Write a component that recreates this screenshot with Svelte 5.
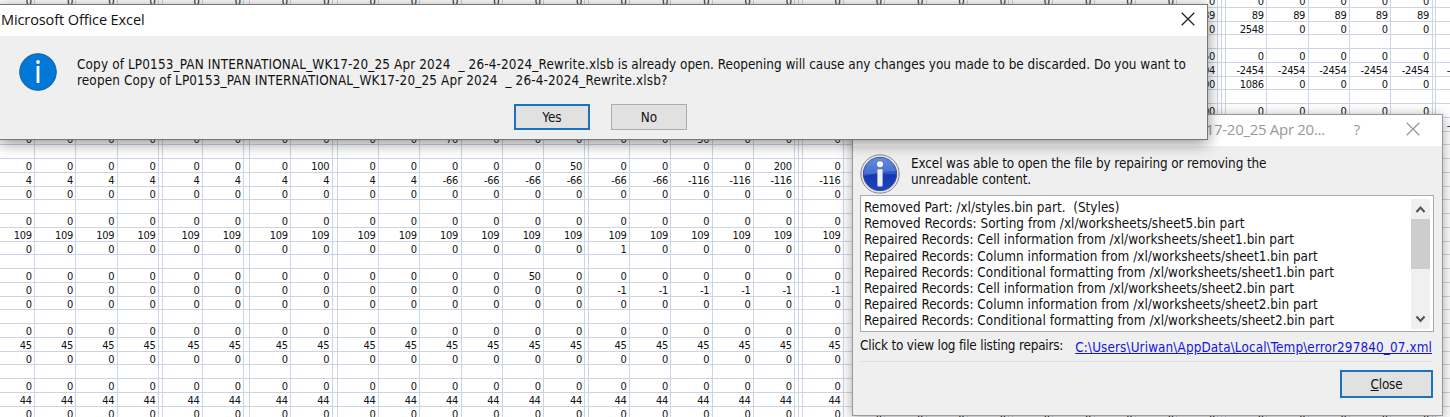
<script>
    const COLUMNS = 35;

    // narrow separator columns, keyed by the data column they follow
    const spacers = { 3: 1, 5: 1, 7: 1, 13: 1, 18: 2, 23: 1, 28: 2, 33: 1 };

    function row(value, changes = {}) {
        const cells = [];
        let current = value;
        for (let i = 0; i < COLUMNS; i++) {
            if (changes.from && i in changes.from) current = changes.from[i];
            cells.push(changes.at && i in changes.at ? changes.at[i] : current);
            for (let s = 0; s < (spacers[i] ?? 0); s++) cells.push('');
        }
        return cells;
    }

    const blank = row('');
    const zero = row(0, { from: { 34: '' } });

    const rows = [
        zero,
        row(89, { from: { 34: '' } }),
        row(0, { at: { 29: 2548, 34: '' } }),
        blank,
        row(0, { at: { 28: 50, 34: '' } }),
        row(-2454, { at: { 28: -2494 } }),
        row(0, { at: { 28: 100, 29: 1086, 34: '' } }),
        blank,
        row(0, { at: { 28: 100, 34: '' } }),
        row(-66, { from: { 28: -2454 } }),
        row(0, { at: { 10: 70, 16: 50, 34: '' } }),
        blank,
        row(0, { at: { 7: 100, 13: 50, 18: 200, 34: '' } }),
        row(4, { from: { 10: -66, 16: -116, 34: '' } }),
        zero,
        blank,
        zero,
        row(109, { from: { 34: '' } }),
        row(0, { at: { 14: 1, 34: '' } }),
        blank,
        row(0, { at: { 12: 50, 34: '' } }),
        row(0, { from: { 14: -1, 34: '' } }),
        zero,
        blank,
        zero,
        row(45, { from: { 34: '' } }),
        zero,
        blank,
        zero,
        row(44, { from: { 34: '' } }),
        zero
    ];

    const repairs = [
        'Removed Part: /xl/styles.bin part.  (Styles)',
        'Removed Records: Sorting from /xl/worksheets/sheet5.bin part',
        'Repaired Records: Cell information from /xl/worksheets/sheet1.bin part',
        'Repaired Records: Column information from /xl/worksheets/sheet1.bin part',
        'Repaired Records: Conditional formatting from /xl/worksheets/sheet1.bin part',
        'Repaired Records: Cell information from /xl/worksheets/sheet2.bin part',
        'Repaired Records: Column information from /xl/worksheets/sheet2.bin part',
        'Repaired Records: Conditional formatting from /xl/worksheets/sheet2.bin part'
    ];
</script>

<div class="screen">
    <div class="sheet">
        {#each rows as cells}
            {#each cells as cell}
                <div class="cell">{cell}</div>
            {/each}
        {/each}
    </div>

    <section class="window repair">
        <header class="titlebar">
            <span class="title">WK17-20_25 Apr 20...</span>
            <span class="help">?</span>
            <svg class="x" viewBox="0 0 14 14"><path d="M.7.7l12.6 12.6M13.3.7L.7 13.3" /></svg>
        </header>
        <div class="summary">
            <svg class="info" viewBox="0 0 40 40">
                <defs>
                    <linearGradient id="ball" x1="0" y1="0" x2="0" y2="1">
                        <stop offset="0" stop-color="#4a7bd8" />
                        <stop offset=".5" stop-color="#2a55c4" />
                        <stop offset=".52" stop-color="#1436b4" />
                        <stop offset="1" stop-color="#1f46c4" />
                    </linearGradient>
                </defs>
                <circle cx="20" cy="20" r="19.2" fill="#e9e9ec" stroke="#85878d" />
                <circle cx="20" cy="20" r="16.7" fill="url(#ball)" stroke="#34508e" />
                <path d="M4 22a16 16 0 0 1 32-5Q22 17 4 22z" fill="#fff" opacity=".14" />
                <circle cx="20" cy="10.2" r="3" fill="#fff" />
                <rect x="17.4" y="15.3" width="5.2" height="17.2" rx="1" fill="#f1f1f5" />
            </svg>
            <p>Excel was able to open the file by repairing or removing the<br />unreadable content.</p>
        </div>
        <div class="list">
            <ul>
                {#each repairs as repair}
                    <li>{repair}</li>
                {/each}
            </ul>
            <div class="scrollbar">
                <svg class="arrow" viewBox="0 0 18 20"><path d="M5 13l4-4.4L13 13" /></svg>
                <div class="thumb"></div>
                <svg class="arrow down" viewBox="0 0 18 20"><path d="M5 7.5l4 4.4 4-4.4" /></svg>
            </div>
        </div>
        <div class="log">
            <span class="log-label">Click to view log file listing repairs:</span>
            <a href="#log">C:\Users\Uriwan\AppData\Local\Temp\error297840_07.xml</a>
        </div>
        <footer>
            <button class="default close"><span><u>C</u>lose</span></button>
        </footer>
    </section>

    <section class="window prompt">
        <header class="titlebar">
            <span class="title">Microsoft Office Excel</span>
            <svg class="x" viewBox="0 0 14 14"><path d="M.7.7l12.6 12.6M13.3.7L.7 13.3" /></svg>
        </header>
        <div class="message">
            <svg class="info" viewBox="0 0 38 38">
                <circle cx="19" cy="19" r="18.3" fill="#0078d7" stroke="#1761a0" />
                <circle cx="19" cy="9" r="1.9" fill="#fff" />
                <rect x="17.6" y="13" width="2.8" height="17" fill="#fff" />
            </svg>
            <p>
                <span class="file">Copy of LP0153_PAN INTERNATIONAL_WK17-20_25 Apr 2024&nbsp; _ 26-4-2024_Rewrite.xlsb</span> is already open. Reopening will cause any changes you made to be discarded. Do you want to<br />
                <span class="file">reopen Copy of LP0153_PAN INTERNATIONAL_WK17-20_25 Apr 2024&nbsp; _ 26-4-2024_Rewrite.xlsb?</span>
            </p>
        </div>
        <div class="buttons">
            <button class="default">Yes</button>
            <button>No</button>
        </div>
    </section>
</div>

<style>
    :global(body) {
        background: white;
    }
    .screen {
        position: relative;
        width: 1450px;
        height: 417px;
        overflow: hidden;
        font-family: 'DejaVu Sans Condensed', 'DejaVu Sans', sans-serif;
        font-stretch: condensed;
        font-size: 13.4px;
        color: #111;
    }

    .sheet {
        display: grid;
        grid-template-columns:
            35.2px repeat(3, 41.3px) 2.7px repeat(2, 41.3px) 5.7px repeat(2, 41.3px) 5px
            repeat(6, 41.3px) 3.4px repeat(5, 41.3px) 3.7px 3.7px repeat(5, 41.3px) 2.8px
            repeat(5, 41.3px) 3.8px 3.8px repeat(5, 41.3px) 3.6px 41.3px;
        grid-auto-rows: 13.75px;
        margin-top: -6px;
        width: 1500px;
    }
    .cell {
        box-sizing: border-box;
        overflow: hidden;
        padding: 1px 2.5px 0 0;
        border-right: 1px solid #cdd5e3;
        border-bottom: 1px solid #cdd5e3;
        line-height: 14px;
        font-size: 11px;
        letter-spacing: -0.3px;
        text-align: right;
        white-space: nowrap;
    }

    .window {
        position: absolute;
        box-sizing: border-box;
        background: #efefef;
    }
    .titlebar {
        display: flex;
        align-items: center;
        box-sizing: border-box;
        height: 31px;
        background: white;
        font-family: 'Open Sans', 'Noto Sans', sans-serif;
        font-stretch: normal;
    }
    .title {
        white-space: nowrap;
    }
    .x {
        width: 14px;
        height: 14px;
        fill: none;
        stroke: #222;
        stroke-width: 1.3;
    }
    p {
        margin: 0;
        line-height: 16.2px;
        white-space: nowrap;
    }
    button {
        box-sizing: border-box;
        width: 76px;
        height: 26px;
        padding: 0;
        border: 1px solid #adadad;
        background: #e1e1e1;
        font: inherit;
        color: inherit;
        text-align: center;
    }
    .default {
        border: 2px solid #1874c0;
    }

    .prompt {
        left: -1px;
        top: 4px;
        width: 1209px;
        height: 136px;
        border: 1px solid #777;
        box-shadow: 0 3px 14px rgba(0, 0, 0, 0.45);
    }
    .prompt .titlebar {
        padding: 0 12px 3px 1px;
        justify-content: space-between;
        font-size: 14.5px;
        letter-spacing: -0.1px;
    }
    .message {
        display: flex;
        padding: 17px 0 0 19px;
        height: 51px;
    }
    .prompt .info {
        width: 38px;
        height: 38px;
        margin-right: 20px;
    }
    .message p {
        padding-top: 4px;
    }
    .file {
        letter-spacing: 0.15px;
    }
    .buttons {
        display: flex;
        gap: 21px;
        padding-left: 514px;
    }

    .repair {
        left: 852px;
        top: 114px;
        width: 591px;
        height: 302px;
        border: 1px solid #999;
        box-shadow: 0 2px 12px rgba(0, 0, 0, 0.35);
    }
    .repair .titlebar {
        justify-content: flex-end;
        padding: 0 22px 3px 0;
        font-size: 15px;
        letter-spacing: -0.3px;
        color: #999;
    }
    .repair .x {
        stroke: #999;
    }
    .help {
        margin: 0 46px 0 29px;
    }
    .summary {
        display: flex;
        height: 49px;
        padding-left: 7px;
    }
    .repair .info {
        width: 40px;
        height: 40px;
        margin: 8px 11px 0 0;
    }
    .summary p {
        padding-top: 10px;
        letter-spacing: -0.1px;
    }
    .list {
        display: flex;
        justify-content: space-between;
        box-sizing: border-box;
        width: 574px;
        height: 137px;
        margin-left: 7px;
        padding: 3px 3px 2px 3px;
        border: 1px solid #aaa;
        background: white;
    }
    ul {
        margin: 0;
        padding: 1px 0 0;
        list-style: none;
    }
    li {
        height: 16.2px;
        line-height: 16px;
        letter-spacing: 0.03px;
        white-space: pre;
    }
    .scrollbar {
        display: flex;
        flex-direction: column;
        width: 19px;
        background: #f0f0f0;
    }
    .arrow {
        width: 19px;
        height: 20px;
        fill: none;
        stroke: #555;
        stroke-width: 2.2;
    }
    .down {
        margin-top: auto;
    }
    .thumb {
        height: 50px;
        background: #cdcdcd;
    }
    .log {
        display: flex;
        justify-content: space-between;
        height: 29px;
        margin: 0 10px 0 7px;
        border-bottom: 1px solid #dedede;
        line-height: 27px;
        white-space: nowrap;
    }
    .log-label {
        letter-spacing: -0.18px;
    }
    .log a {
        padding-top: 2px;
        letter-spacing: 0.12px;
        color: #1414e0;
    }
    footer {
        display: flex;
        justify-content: flex-end;
        padding: 8px 9px 0 0;
    }
    .close {
        width: 93px;
        height: 28px;
        letter-spacing: -0.2px;
    }
</style>
